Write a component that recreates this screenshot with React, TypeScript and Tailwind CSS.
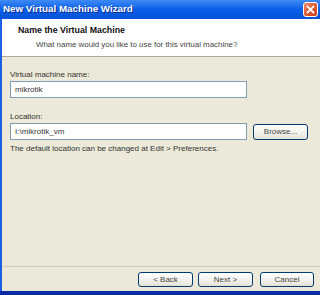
import React from 'react';

const font = { fontFamily: '"Liberation Sans", Arial, sans-serif' };

const XpButton: React.FC<{ label: string; className?: string }> = ({ label, className = '' }) => (
  <div
    className={`flex items-center justify-center rounded-[3px] border border-[#003c74] bg-gradient-to-b from-white via-[#f4f3ee] to-[#e3e1d6] text-[8px] text-[#444] ${className}`}
  >
    {label}
  </div>
);

const App: React.FC = () => {
  return (
    <div className="w-[320px] h-[295px] flex flex-col overflow-hidden bg-[#ece9d8]" style={font}>
      {/* title bar */}
      <div className="h-[19px] flex items-center justify-between pl-[3px] pr-[2px] bg-gradient-to-b from-[#3d8bf5] via-[#0a5fe8] to-[#0653d8]">
        <span className="text-white font-bold text-[9.8px] [text-shadow:1px_1px_0_#0a2a8a]">
          New Virtual Machine Wizard
        </span>
        <div className="w-[15px] h-[15px] rounded-[3px] border border-white bg-gradient-to-br from-[#f08a6c] via-[#e2592f] to-[#c8401a] flex items-center justify-center">
          <svg width="9" height="9" viewBox="0 0 9 9">
            <path d="M1.5 1.5 L7.5 7.5 M7.5 1.5 L1.5 7.5" stroke="white" strokeWidth="1.8" strokeLinecap="square" />
          </svg>
        </div>
      </div>

      <div className="flex-1 flex flex-col border-l-2 border-[#1b5fe6]">
        {/* header */}
        <div className="h-[38px] bg-white border-b border-[#aca899] pl-[16px] pt-[5px]">
          <div className="font-bold text-[8.8px] text-[#111]">Name the Virtual Machine</div>
          <div className="pl-[18px] mt-[2px] text-[7.9px] text-[#444]">
            What name would you like to use for this virtual machine?
          </div>
        </div>

        {/* body */}
        <div className="flex-1 flex flex-col pl-[8px] pt-[12px] text-[8px] text-[#333]">
          <div className="h-[11px] leading-[11px]">Virtual machine name:</div>
          <div className="mt-[1px] w-[237px] h-[17px] bg-white border border-[#7f9db9] flex items-center pl-[4px]">
            mikrotik
          </div>
          <div className="mt-[13px] h-[11px] leading-[11px]">Location:</div>
          <div className="mt-[1px] flex items-center gap-[6px]">
            <div className="w-[237px] h-[17px] bg-white border border-[#7f9db9] flex items-center pl-[4px]">
              I:\mikrotik_vm
            </div>
            <XpButton label="Browse..." className="w-[55px] h-[16px] border-[#2d4f9e]" />
          </div>
          <div className="mt-[3px] h-[11px] leading-[11px]">
            The default location can be changed at Edit &gt; Preferences.
          </div>
        </div>

        {/* footer */}
        <div className="h-[25px] border-t border-[#d0cdbf] flex items-start justify-end pr-[6px] pt-[5px]">
          <XpButton label="< Back" className="w-[55px] h-[15px]" />
          <XpButton label="Next >" className="w-[55px] h-[15px] ml-[5px]" />
          <XpButton label="Cancel" className="w-[54px] h-[15px] ml-[7px]" />
        </div>
      </div>

      <div className="h-[4px] bg-[#0a2aa8]" />
    </div>
  );
};

export default App;
